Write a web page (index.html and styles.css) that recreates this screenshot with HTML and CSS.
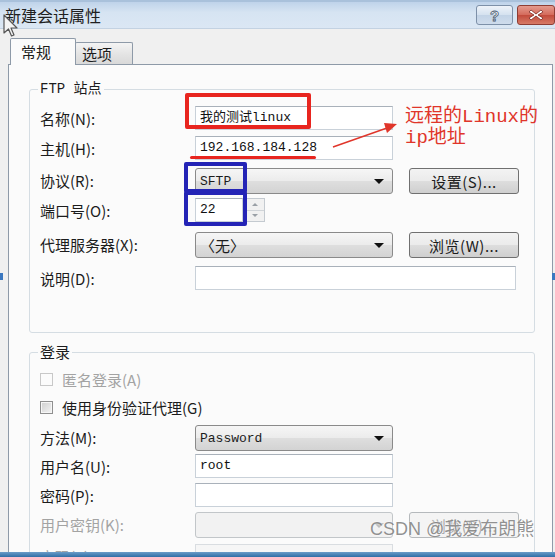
FILE: index.html
```html
<!DOCTYPE html>
<html lang="zh">
<head>
<meta charset="utf-8">
<title>新建会话属性</title>
<link rel="stylesheet" href="styles.css">
</head>
<body>
<div class="window">
  <header class="titlebar">
    <span class="title">新建会话属性</span>
    <div class="ctrls">
      <div class="cbtn help"><span class="q">?</span></div>
      <div class="cbtn close">
        <svg width="16" height="12" viewBox="0 0 16 12"><path d="M3 1 L8 5 L13 1 L15 3 L10 6 L15 9 L13 11 L8 7 L3 11 L1 9 L6 6 L1 3 Z" fill="#fff" stroke="#7a2a22" stroke-width="0.8"/></svg>
      </div>
    </div>
  </header>

  <main class="body">
    <nav class="tabs">
      <div class="tab active">常规</div>
      <div class="tab">选项</div>
    </nav>
    <section class="panel">
      <fieldset class="group site">
        <legend>FTP 站点</legend>
        <div class="form site-form">
          <label class="lbl">名称(N):</label>
          <div class="input field mono">我的测试linux</div>

          <label class="lbl">主机(H):</label>
          <div class="input field mono">192.168.184.128</div>

          <label class="lbl">协议(R):</label>
          <div class="select field mono tall"><span>SFTP</span><i class="arrow"></i></div>
          <div class="button tall">设置(S)...</div>

          <label class="lbl">端口号(O):</label>
          <div class="port field">
            <div class="input small mono">22</div>
            <div class="spin"><span class="up"></span><span class="down"></span></div>
          </div>

          <label class="lbl">代理服务器(X):</label>
          <div class="select field tall"><span>〈无〉</span><i class="arrow"></i></div>
          <div class="button tall">浏览(W)...</div>

          <label class="lbl">说明(D):</label>
          <div class="input memo"></div>
        </div>
      </fieldset>

      <fieldset class="group login">
        <legend>登录</legend>
        <div class="check disabled"><span class="box"></span>匿名登录(A)</div>
        <div class="check"><span class="box"></span>使用身份验证代理(G)</div>
        <div class="form login-form">
          <label class="lbl">方法(M):</label>
          <div class="select field mono tall"><span>Password</span><i class="arrow"></i></div>

          <label class="lbl">用户名(U):</label>
          <div class="input field mono">root</div>

          <label class="lbl">密码(P):</label>
          <div class="input field"></div>

          <label class="lbl off">用户密钥(K):</label>
          <div class="select field tall dis"><span></span><i class="arrow"></i></div>
          <div class="button tall dis">浏览(B)...</div>

          <label class="lbl off">密码(E):</label>
          <div class="input field dis"></div>
        </div>
      </fieldset>
    </section>
  </main>
  <div class="taskbar"></div>

  <!-- annotations drawn over the dialog -->
  <div class="mark red-box"></div>
  <div class="mark red-line"></div>
  <div class="mark blue-box one"></div>
  <div class="mark blue-box two"></div>
  <svg class="arrow-note" width="72" height="34" viewBox="0 0 72 34">
    <line x1="3" y1="29" x2="57" y2="10" stroke="#e0352a" stroke-width="1.4"/>
    <polygon points="67,6 57,15 54,5" fill="#e0352a"/>
  </svg>
  <div class="note">远程的Linux的<br>ip地址</div>
  <svg class="cursor" width="16" height="24" viewBox="0 0 16 24">
    <path d="M1 1 L1 19 L5.5 15 L8.5 22 L11 21 L8 14 L14 14 Z" fill="#f4f4f4" stroke="#555" stroke-width="1.2" stroke-linejoin="round"/>
  </svg>
  <div class="handle left"></div>
  <div class="handle right"></div>
  <div class="watermark">CSDN @我爱布朗熊</div>
</div>
</body>
</html>
```

FILE: styles.css
```css
* { box-sizing: border-box; }

body {
  margin: 0;
  width: 555px;
  height: 557px;
  overflow: hidden;
  background: #f0f0f0;
  font-family: "Noto Sans CJK SC", "Liberation Sans", sans-serif;
  font-size: 15px;
  color: #1c1c1c;
}

.window {
  position: relative;
  width: 555px;
  height: 557px;
  display: flex;
  flex-direction: column;
}

/* title bar */
.titlebar {
  height: 29px;
  flex: none;
  display: flex;
  justify-content: space-between;
  padding-left: 5px;
  background: linear-gradient(#bfd3ea, #d6e4f2 40%, #dbe7f4);
  border-top: 2px solid #a9c1db;
  border-bottom: 1px solid #c3d2e2;
}
.title {
  font-size: 16px;
  line-height: 26px;
  color: #202020;
}
.ctrls {
  display: flex;
  gap: 4px;
  padding-top: 3px;
}
.cbtn {
  height: 20px;
  width: 37px;
  display: flex;
  align-items: center;
  justify-content: center;
  border-radius: 3px;
}
.help {
  border: 1px solid #7d90a8;
  background: linear-gradient(#eef3f9, #d4e1ef 50%, #c2d3e6 51%, #cfdcec);
}
.q {
  font-family: "Liberation Sans", sans-serif;
  font-weight: bold;
  font-size: 15px;
  color: #f2f5f9;
  -webkit-text-stroke: 0.8px #4a5a6e;
  line-height: 1;
}
.close {
  width: 38px;
  border: 1px solid #8e3d34;
  background: linear-gradient(#e49a8d, #d46a5b 50%, #c24a3b 51%, #d77a66);
}

/* body */
.body {
  flex: 1;
  min-height: 0;
  display: flex;
  flex-direction: column;
  padding: 9px 2px 0 8px;
}
.tabs {
  display: flex;
  align-items: flex-end;
  height: 27px;
  margin-bottom: -1px;
  padding-left: 2px;
  flex: none;
}
.tab {
  height: 23px;
  width: 58px;
  padding-left: 6px;
  line-height: 21px;
  border: 1px solid #8e9aa8;
  border-bottom: none;
  border-radius: 2px 2px 0 0;
  background: linear-gradient(#f4f4f4, #e4e4e4 50%, #d8d8d8);
}
.tab.active {
  position: relative;
  z-index: 1;
  height: 27px;
  width: 66px;
  padding-left: 10px;
  line-height: 25px;
  margin-right: -1px;
  background: #fbfbfb;
}

.panel {
  flex: 1;
  min-height: 0;
  overflow: hidden;
  border: 1px solid #8e9aa8;
  border-bottom: none;
  background: #fbfbfb;
  padding: 15px 17px 0 20px;
}

/* group boxes */
.group {
  margin: 0;
  min-width: 0;
  border: 1px solid #d5dde3;
  border-radius: 3px;
  padding: 8px 10px 12px 10px;
}
.group legend {
  padding: 0 2px;
  margin-left: -2px;
  line-height: 18px;
  font-size: 15px;
}
.site legend { font-family: "Liberation Mono", "Noto Sans CJK SC", monospace; font-size: 14px; }
.login {
  margin-top: 10px;
  padding-top: 4px;
}

.form {
  display: grid;
  grid-template-columns: 139px 198px 110px;
  column-gap: 16px;
  align-items: start;
}
.site-form { grid-template-rows: 30px 32px 30px 34px 34px 54px; }
.login-form {
  margin-top: 4px;
  grid-template-rows: 29px 29px 29px 32px 30px;
}

.lbl {
  grid-column: 1;
  height: 25px;
  line-height: 25px;
  white-space: nowrap;
}
.lbl.off { color: #a3a3a3; }
.field { grid-column: 2; }
.button { grid-column: 3; }
.memo { grid-column: 2 / 4; width: 321px; height: 54px; }

.mono {
  font-family: "Liberation Mono", "Noto Sans CJK SC", monospace;
  font-size: 13px;
}

.input {
  height: 24px;
  border: 1px solid #c9d1d9;
  border-top-color: #a9b1ba;
  background: #fff;
  padding-left: 4px;
  line-height: 22px;
  color: #111;
}
.input.dis { background: #f6f6f6; border-color: #d9dde1; }

.select {
  height: 26px;
  display: flex;
  align-items: center;
  justify-content: space-between;
  padding: 0 8px 0 4px;
  border: 1px solid #8a8a8a;
  border-radius: 3px;
  background: linear-gradient(#f6f6f6, #ececec 48%, #dedede 52%, #d3d3d3);
}
.select.dis {
  border-color: #c2c6c9;
  background: #f2f2f2;
}
.arrow {
  width: 0;
  height: 0;
  border-left: 5px solid transparent;
  border-right: 5px solid transparent;
  border-top: 5px solid #111;
}
.select.dis .arrow { border-top-color: #bcbcbc; }

.button {
  height: 26px;
  display: flex;
  align-items: center;
  justify-content: center;
  border: 1px solid #707070;
  border-radius: 3px;
  background: linear-gradient(#f3f3f3, #ebebeb 48%, #dddddd 52%, #cfcfcf);
  letter-spacing: 0.5px;
}
.button.dis {
  border-color: #b5b9bc;
  background: #f4f4f4;
  color: #a6a6a6;
}

.port {
  display: flex;
  gap: 2px;
}
.input.small { width: 48px; height: 24px; }
.spin {
  width: 20px;
  height: 24px;
  display: flex;
  flex-direction: column;
  border: 1px solid #c4cad0;
  background: #f1f1f1;
}
.spin span {
  flex: 1;
  display: flex;
  align-items: center;
  justify-content: center;
}
.spin .up { border-bottom: 1px solid #d0d4d8; }
.spin .up::after {
  content: "";
  border-left: 3px solid transparent;
  border-right: 3px solid transparent;
  border-bottom: 3px solid #9aa0a6;
}
.spin .down::after {
  content: "";
  border-left: 3px solid transparent;
  border-right: 3px solid transparent;
  border-top: 3px solid #9aa0a6;
}

/* checkboxes */
.check {
  height: 28px;
  display: flex;
  align-items: center;
  gap: 9px;
}
.box {
  width: 13px;
  height: 13px;
  border: 1px solid #8f8f8f;
  background: linear-gradient(135deg, #cfcfcf, #f4f4f4);
  box-shadow: inset 0 0 0 1px #f6f6f6;
}
.check.disabled { color: #a3a3a3; }
.check.disabled .box {
  border-color: #c8c8c8;
  background: #fbfbfb;
  box-shadow: none;
}

.taskbar {
  height: 5px;
  flex: none;
  background: linear-gradient(#6a9cc8, #2f6ea6);
}

/* overlays: annotations */
.mark { position: absolute; }
.red-box {
  left: 185px;
  top: 93px;
  width: 126px;
  height: 36px;
  border: 4px solid #e8251f;
  border-radius: 2px;
}
.red-line {
  left: 190px;
  top: 156px;
  width: 126px;
  height: 3px;
  border-radius: 2px;
  background: #e8251f;
}
.blue-box {
  left: 184px;
  width: 63px;
  border: 4px solid #2424b6;
  border-radius: 2px;
}
.blue-box.one { top: 162px; height: 31px; }
.blue-box.two { top: 191px; height: 35px; }

.arrow-note {
  position: absolute;
  left: 330px;
  top: 118px;
}
.note {
  position: absolute;
  left: 405px;
  top: 107px;
  font-family: "Liberation Mono", "Noto Sans CJK SC", monospace;
  font-size: 19px;
  line-height: 21px;
  color: #e0352a;
}
.cursor {
  position: absolute;
  left: 3px;
  top: 14px;
}
.handle {
  position: absolute;
  top: 273px;
  width: 3px;
  height: 7px;
  background: #3b78c0;
}
.handle.left { left: 0; }
.handle.right { left: 552px; }

.watermark {
  position: absolute;
  left: 370px;
  top: 514px;
  font-family: "Liberation Sans", "Noto Sans CJK SC", sans-serif;
  font-size: 18px;
  color: rgba(110, 110, 110, 0.75);
  text-shadow: 0 0 2px #fff;
  white-space: nowrap;
}
```
